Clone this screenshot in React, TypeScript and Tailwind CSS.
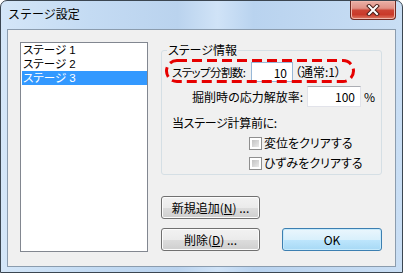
import React from 'react';

const stages = ['ステージ 1', 'ステージ 2', 'ステージ 3'];

function CloseButton() {
  return (
    <div className="mr-[6px] flex h-[19px] w-[46px] items-center justify-center rounded-b-[4px] border border-t-0 border-[#6e2a22] bg-[linear-gradient(#eab0a6_0%,#e19186_40%,#cc4434_52%,#c93a2a_75%,#de7b66_100%)] shadow-[inset_0_0_0_1px_#f0b7ac]">
      <svg width="14" height="12" viewBox="0 0 14 12">
        <path d="M3 2 L11 10 M11 2 L3 10" stroke="#4a1f1a" strokeWidth="4" strokeLinecap="square" />
        <path d="M3 2 L11 10 M11 2 L3 10" stroke="#ffffff" strokeWidth="2" strokeLinecap="square" />
      </svg>
    </div>
  );
}

function Checkbox({ label }: { label: string }) {
  return (
    <div className="flex h-[20px] items-center pl-[87px]">
      <div className="h-[13px] w-[13px] shrink-0 border border-[#8f8f8f] bg-white p-[2px]">
        <div className="h-full w-full bg-[linear-gradient(135deg,#c3c3c3,#eaeaea)]" />
      </div>
      <span className="ml-[2px] whitespace-nowrap leading-[14px]">{label}</span>
    </div>
  );
}

function WinButton({ children, primary = false, className = '' }: { children: React.ReactNode; primary?: boolean; className?: string }) {
  const look = primary
    ? 'border-[#3c7fb1] bg-[linear-gradient(#eaf6fd_0%,#d9f0fc_50%,#bee6fd_50%,#a7d9f5_100%)] shadow-[inset_0_0_0_1px_#c6eafc]'
    : 'border-[#707070] bg-[linear-gradient(#f2f2f2_0%,#ebebeb_50%,#dddddd_50%,#cfcfcf_100%)] shadow-[inset_0_0_0_1px_#fcfcfc]';
  return (
    <div className={`flex h-[23px] items-center justify-center whitespace-nowrap rounded-[3px] border leading-[14px] ${look} ${className}`}>
      {children}
    </div>
  );
}

export default function App() {
  return (
    <div className="h-[273px] w-[403px] font-['Noto_Sans_CJK_JP',sans-serif] text-[12px] text-black [font-feature-settings:'palt']">
      <div className="flex h-full flex-col rounded-t-[7px] border border-[#3b4651] bg-[linear-gradient(90deg,#d4e6f8_0%,#c4dbf3_22%,#bad3ee_44%,#d0e3f7_54%,#b9d3ef_63%,#c9def4_100%)]">
        {/* Title bar */}
        <div className="flex h-[28px] items-start justify-between">
          <span className="pl-[7px] pt-[5px] leading-[16px] [font-feature-settings:normal]">ステージ設定</span>
          <CloseButton />
        </div>

        {/* Client area */}
        <div className="mx-[6px] mb-[5px] flex-1 border border-[#8b9cae] bg-[#f0f0f0]">
          <div className="flex items-start pl-[12px] pt-[12px]">
            {/* Stage list */}
            <div className="h-[210px] w-[128px] shrink-0 border border-[#828790] bg-white font-['Liberation_Sans','Noto_Sans_CJK_JP',sans-serif] text-[11.5px]">
              {stages.map((s, i) => (
                <div
                  key={s}
                  className={`ml-[1px] h-[14px] overflow-hidden whitespace-nowrap pl-[1px] leading-[14px] ${i === 2 ? 'bg-[#3399ff] text-white' : ''}`}
                >
                  {s}
                </div>
              ))}
            </div>

            <div className="ml-[13px] mt-[1px] w-[221px] shrink-0">
              <fieldset className="rounded-[3px] border border-[#d5dfe5] pb-[1px]">
                <legend className="ml-[5px] px-[1px] leading-[14px]">ステージ情報</legend>

                <div className="relative mt-[5px] flex h-[20px] items-center pl-[10px]">
                  <span className="w-[79px] shrink-0 whitespace-nowrap text-[11.5px] leading-[14px] tracking-[-0.6px]">ステップ分割数:</span>
                  <input
                    readOnly
                    value="10"
                    className="h-[20px] w-[42px] shrink-0 border border-[#98b8d8] bg-white pr-[5px] text-right leading-[14px] outline-none"
                  />
                  <span className="ml-[2px] whitespace-nowrap leading-[14px]">（通常:1）</span>
                  <svg className="absolute left-[3px] top-[-3px]" width="190" height="24" viewBox="0 0 190 24">
                    <rect x="1.5" y="1.5" width="187" height="21" rx="10.5" fill="none" stroke="#e60000" strokeWidth="3" strokeDasharray="10 5" />
                  </svg>
                </div>

                <div className="mt-[4px] flex h-[21px] items-center">
                  <span className="w-[141px] shrink-0 whitespace-nowrap text-right leading-[14px]">掘削時の応力解放率:</span>
                  <input
                    readOnly
                    value="100"
                    className="ml-[4px] h-[21px] w-[54px] shrink-0 border border-[#e2e3ea] border-t-[#abadb3] bg-white pr-[5px] text-right leading-[14px] outline-none"
                  />
                  <span className="ml-[3px] leading-[14px]">%</span>
                </div>

                <div className="mt-[9px] whitespace-nowrap pl-[10px] leading-[14px] tracking-[-0.3px]">当ステージ計算前に:</div>

                <div className="mt-[3px]">
                  <Checkbox label="変位をクリアする" />
                  <Checkbox label="ひずみをクリアする" />
                </div>
              </fieldset>

              <WinButton className="mt-[21px] w-[99px]">
                新規追加(<span className="underline">N</span>) ...
              </WinButton>
              <div className="mt-[9px] flex">
                <WinButton className="w-[99px]">
                  削除(<span className="underline">D</span>) ...
                </WinButton>
                <WinButton primary className="ml-[22px] w-[100px]">
                  OK
                </WinButton>
              </div>
            </div>
          </div>
        </div>
      </div>
    </div>
  );
}
